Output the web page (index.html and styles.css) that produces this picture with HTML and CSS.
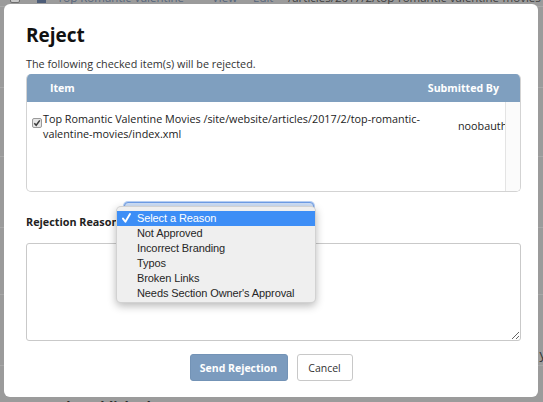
FILE: index.html
```html
<!DOCTYPE html>
<html>
<head>
<meta charset="utf-8">
<link rel="stylesheet" href="styles.css">
</head>
<body>
<div class="page">
  <div class="page-top">
    <svg class="p-check" width="10" height="10" viewBox="0 0 10 10"><rect x="0.5" y="0.5" width="9" height="9" rx="1.5" fill="#c8c8c8" stroke="#6e6e6e"/></svg>
    <svg class="p-img" width="9" height="10" viewBox="0 0 9 10"><rect x="0" y="0" width="9" height="10" fill="#4d5d78"/></svg>
    <span class="p-link p-title">Top Romantic Valentine</span>
    <span class="p-link p-view">View</span>
    <span class="p-link p-edit">Edit</span>
    <span class="p-path">/articles/2017/2/top-romantic-valentine-movies</span>
  </div>
  <div class="page-rows">
    <div class="page-row r1"></div>
    <div class="page-row r2"></div>
    <div class="page-row r3"></div>
    <div class="page-row r4"></div>
    <div class="page-row r5"><span class="p-side">y</span></div>
  </div>
  <div class="recent">Recently Published</div>
</div>

<div class="modal">
  <h1 class="title">Reject</h1>
  <p class="subtitle">The following checked item(s) will be rejected.</p>
  <div class="table">
    <div class="thead">
      <span class="th-item">Item</span>
      <span class="th-by">Submitted By</span>
    </div>
    <div class="tbody">
      <div class="cell-check">
        <svg width="10" height="10" viewBox="0 0 10 10"><rect x="0.5" y="0.5" width="9" height="9" rx="1.5" fill="#e6e6e6" stroke="#9a9a9a"/><path d="M2.3 5.2 L4.2 7.3 L7.8 2.4" fill="none" stroke="#3a3a3a" stroke-width="1.5"/></svg>
      </div>
      <div class="cell-item">Top Romantic Valentine Movies /site/website/articles/2017/2/top-romantic-valentine-movies/index.xml</div>
      <div class="cell-by">noobauth</div>
      <div class="gutter"></div>
    </div>
  </div>
  <div class="reason-row">
    <label class="reason-label">Rejection Reason</label>
    <div class="select-box"></div>
  </div>
  <textarea class="comment"></textarea>
  <div class="actions">
    <button class="btn btn-primary">Send Rejection</button>
    <button class="btn btn-default">Cancel</button>
  </div>
</div>

<div class="menu">
  <div class="menu-item selected">
    <svg class="tick" width="9" height="10" viewBox="0 0 9 10"><path d="M1 5.6 L3.4 8.8 L8 1" fill="none" stroke="#ffffff" stroke-width="1.9" stroke-linecap="round" stroke-linejoin="round"/></svg>
    Select a Reason
  </div>
  <div class="menu-item">Not Approved</div>
  <div class="menu-item">Incorrect Branding</div>
  <div class="menu-item">Typos</div>
  <div class="menu-item">Broken Links</div>
  <div class="menu-item">Needs Section Owner's Approval</div>
</div>
</body>
</html>
```

FILE: styles.css
```css
html, body {
  margin: 0;
  padding: 0;
}
body {
  width: 543px;
  height: 402px;
  overflow: hidden;
  background: #9b9b9b;
  position: relative;
  font-family: "Open Sans", "Liberation Sans", sans-serif;
}

/* background page (dimmed) */
.page {
  height: 402px;
  display: flex;
  flex-direction: column;
  overflow: hidden;
}
.page-top {
  flex: none;
  height: 16px;
  margin-top: -10px;
  display: flex;
  align-items: center;
  font-family: "Open Sans", sans-serif;
  font-size: 11.5px;
  line-height: 16px;
  white-space: nowrap;
  border-bottom: 1px solid #a9a9a9;
}
.page-top > * { flex: none; }
.p-check { margin-left: 10px; }
.p-img { margin-left: 17px; }
.p-link { color: #56657c; }
.p-title { margin-left: 11px; width: 155px; overflow: hidden; }
.p-view { width: 41px; }
.p-edit { width: 35px; }
.p-path { color: #3e3e3e; }
.page-rows {
  flex: 1;
  display: flex;
  flex-direction: column;
}
.page-row {
  border-bottom: 1px solid #a8a8a8;
  display: flex;
  justify-content: flex-end;
}
.p-side {
  margin-top: 51px;
  margin-right: -3px;
  font-size: 13px;
  line-height: 16px;
  color: #333;
}
.r1 { height: 80px; }
.r2 { height: 68px; }
.r3 { height: 70px; }
.r4 { height: 66px; }
.r5 { height: 70px; }
.recent {
  flex: none;
  height: 4px;
  line-height: 18px;
  padding-left: 18px;
  font-family: "Open Sans", sans-serif;
  font-size: 14px;
  font-weight: 700;
  color: #2a2a2a;
  overflow: visible;
}

/* modal */
.modal {
  position: absolute;
  left: 4px;
  top: 4px;
  width: 534px;
  height: 393px;
  box-sizing: border-box;
  padding: 19px 17px 0 22px;
  background: #ffffff;
  border-radius: 6px;
  color: #222;
}
.title {
  margin: 0;
  font-size: 19px;
  line-height: 24px;
  font-weight: 700;
  color: #111;
}
.subtitle {
  margin: 9px 0 0;
  font-size: 10.8px;
  line-height: 15px;
  color: #333;
}
.table {
  margin-top: 3px;
  height: 118px;
  box-sizing: border-box;
  border: 1px solid #d3d3d3;
  border-top: none;
  border-radius: 5px;
  overflow: hidden;
  display: flex;
  flex-direction: column;
}
.thead {
  flex: none;
  height: 28px;
  background: #7f9fbf;
  color: #fff;
  font-size: 10.6px;
  font-weight: 700;
  display: flex;
  align-items: center;
  justify-content: space-between;
  padding: 0 21px 0 23px;
}
.tbody {
  flex: 1;
  display: grid;
  grid-template-columns: 16px 390px 1fr 15px;
  font-size: 10.8px;
  line-height: 15px;
  color: #222;
}
.cell-check {
  padding: 16px 0 0 5px;
}
.cell-check svg { display: block; }
.cell-item {
  padding-top: 9px;
}
.cell-by {
  padding: 16px 0 0 25px;
  overflow: hidden;
  white-space: nowrap;
}
.gutter {
  border-left: 1px solid #e4e4e4;
  background: #fbfbfb;
}
.reason-row {
  margin-top: 10px;
  height: 32px;
  display: grid;
  grid-template-columns: 98px 190px;
  align-items: start;
}
.reason-label {
  padding-top: 12px;
  font-size: 10.8px;
  line-height: 15px;
  font-weight: 700;
  color: #222;
  white-space: nowrap;
}
.select-box {
  height: 24px;
  box-sizing: border-box;
  border: 1px solid #6e9de6;
  border-radius: 4px;
  background: #cfe0f8;
  box-shadow: 0 0 0 1px rgba(110, 160, 235, 0.5);
}
.comment {
  display: block;
  margin: 9px 0 0;
  width: 495px;
  height: 98px;
  box-sizing: border-box;
  border: 1px solid #c9c9c9;
  border-radius: 3px;
  resize: both;
  padding: 4px;
  font-family: "Open Sans", sans-serif;
  outline: none;
}
.actions {
  margin-top: 13px;
  padding-right: 5px;
  display: flex;
  justify-content: center;
  gap: 9px;
}
.btn {
  height: 27px;
  box-sizing: border-box;
  border-radius: 3px;
  font-family: "Open Sans", sans-serif;
  font-size: 10.5px;
  padding: 0;
  cursor: pointer;
}
.btn-primary {
  width: 98px;
  background: #7b9bbe;
  border: 1px solid #7393b6;
  color: #fff;
  font-weight: 700;
}
.btn-default {
  width: 56px;
  background: #fff;
  border: 1px solid #c8c8c8;
  color: #333;
}

/* open native-style dropdown */
.menu {
  position: absolute;
  left: 116px;
  top: 206px;
  width: 200px;
  height: 97px;
  box-sizing: border-box;
  padding: 4px 0 3px;
  background: #efefef;
  border: 1px solid rgba(0, 0, 0, 0.12);
  border-radius: 5px;
  box-shadow: 0 3px 9px rgba(0, 0, 0, 0.28);
  font-family: "Liberation Sans", Arial, sans-serif;
  font-size: 11px;
  letter-spacing: -0.1px;
  color: #262626;
}
.menu-item {
  height: 15px;
  line-height: 15px;
  padding-left: 20px;
  position: relative;
  white-space: nowrap;
}
.menu-item.selected {
  background: #3d8ef6;
  color: #fff;
}
.tick {
  position: absolute;
  left: 5px;
  top: 2px;
}
```
